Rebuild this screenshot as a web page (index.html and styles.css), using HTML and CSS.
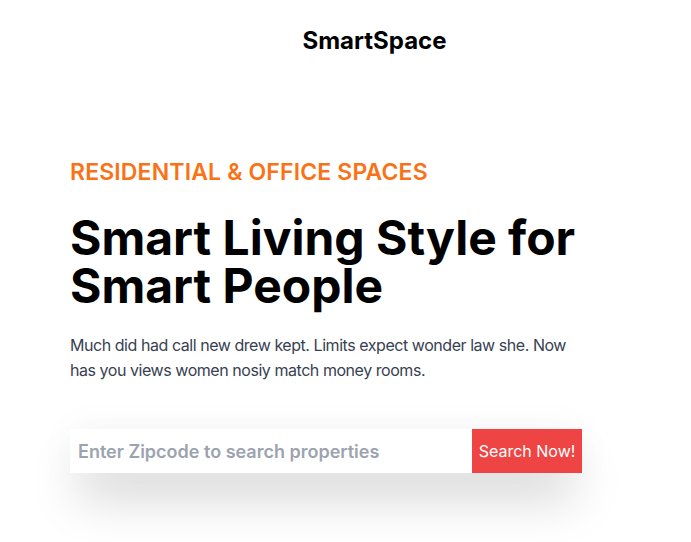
FILE: index.html
```html
<!DOCTYPE html>
<html lang="en">
<head>
<meta charset="utf-8">
<title>SmartSpace</title>
<link rel="stylesheet" href="styles.css">
</head>
<body>
<header class="nav">
  <a class="brand" href="#">SmartSpace</a>
</header>
<main class="hero">
  <p class="eyebrow">RESIDENTIAL &amp; OFFICE SPACES</p>
  <h1 class="title">Smart Living Style for<br>Smart People</h1>
  <p class="lead">Much did had call new drew kept. Limits expect wonder law she. Now has you views women nosiy match money rooms.</p>
  <form class="search">
    <input class="search-input" type="text" placeholder="Enter Zipcode to search properties">
    <button class="search-btn" type="button">Search Now!</button>
  </form>
</main>
</body>
</html>
```
FILE: styles.css
```css
html, body {
  margin: 0;
  padding: 0;
  background: #ffffff;
}
body {
  font-family: Inter, "Noto Sans", "Liberation Sans", sans-serif;
  color: #000;
  min-height: 542px;
}
.nav {
  display: flex;
  justify-content: center;
  padding: 27px 0 0 58px;
}
.brand {
  font-size: 24px;
  line-height: 28px;
  font-weight: 700;
  color: #000;
  text-decoration: none;
}
.hero {
  padding: 101px 0 0 70px;
}
.eyebrow {
  margin: 0;
  font-size: 23px;
  line-height: 32px;
  font-weight: 600;
  letter-spacing: 0.15px;
  color: #f97316;
}
.title {
  margin: 26px 0 0;
  font-size: 48px;
  line-height: 48px;
  font-weight: 700;
}
.lead {
  margin: 23px 0 0;
  width: 512px;
  font-size: 16px;
  line-height: 25px;
  letter-spacing: -0.45px;
  color: #374151;
}
.search {
  display: flex;
  width: 512px;
  height: 44px;
  margin-top: 46px;
  background: #fff;
  box-shadow: 0 30px 50px -8px rgba(0, 0, 0, 0.22), 0 0 40px rgba(0, 0, 0, 0.04);
}
.search-input {
  flex: 1;
  border: 0;
  outline: none;
  padding: 0 8px;
  font-family: inherit;
  font-size: 18px;
  font-weight: 600;
  color: #374151;
  background: #fff;
}
.search-input::placeholder {
  color: #9ca3af;
}
.search-btn {
  width: 110px;
  border: 0;
  background: #ef4444;
  color: #fff;
  font-family: inherit;
  font-size: 16px;
  padding: 0;
}
```
